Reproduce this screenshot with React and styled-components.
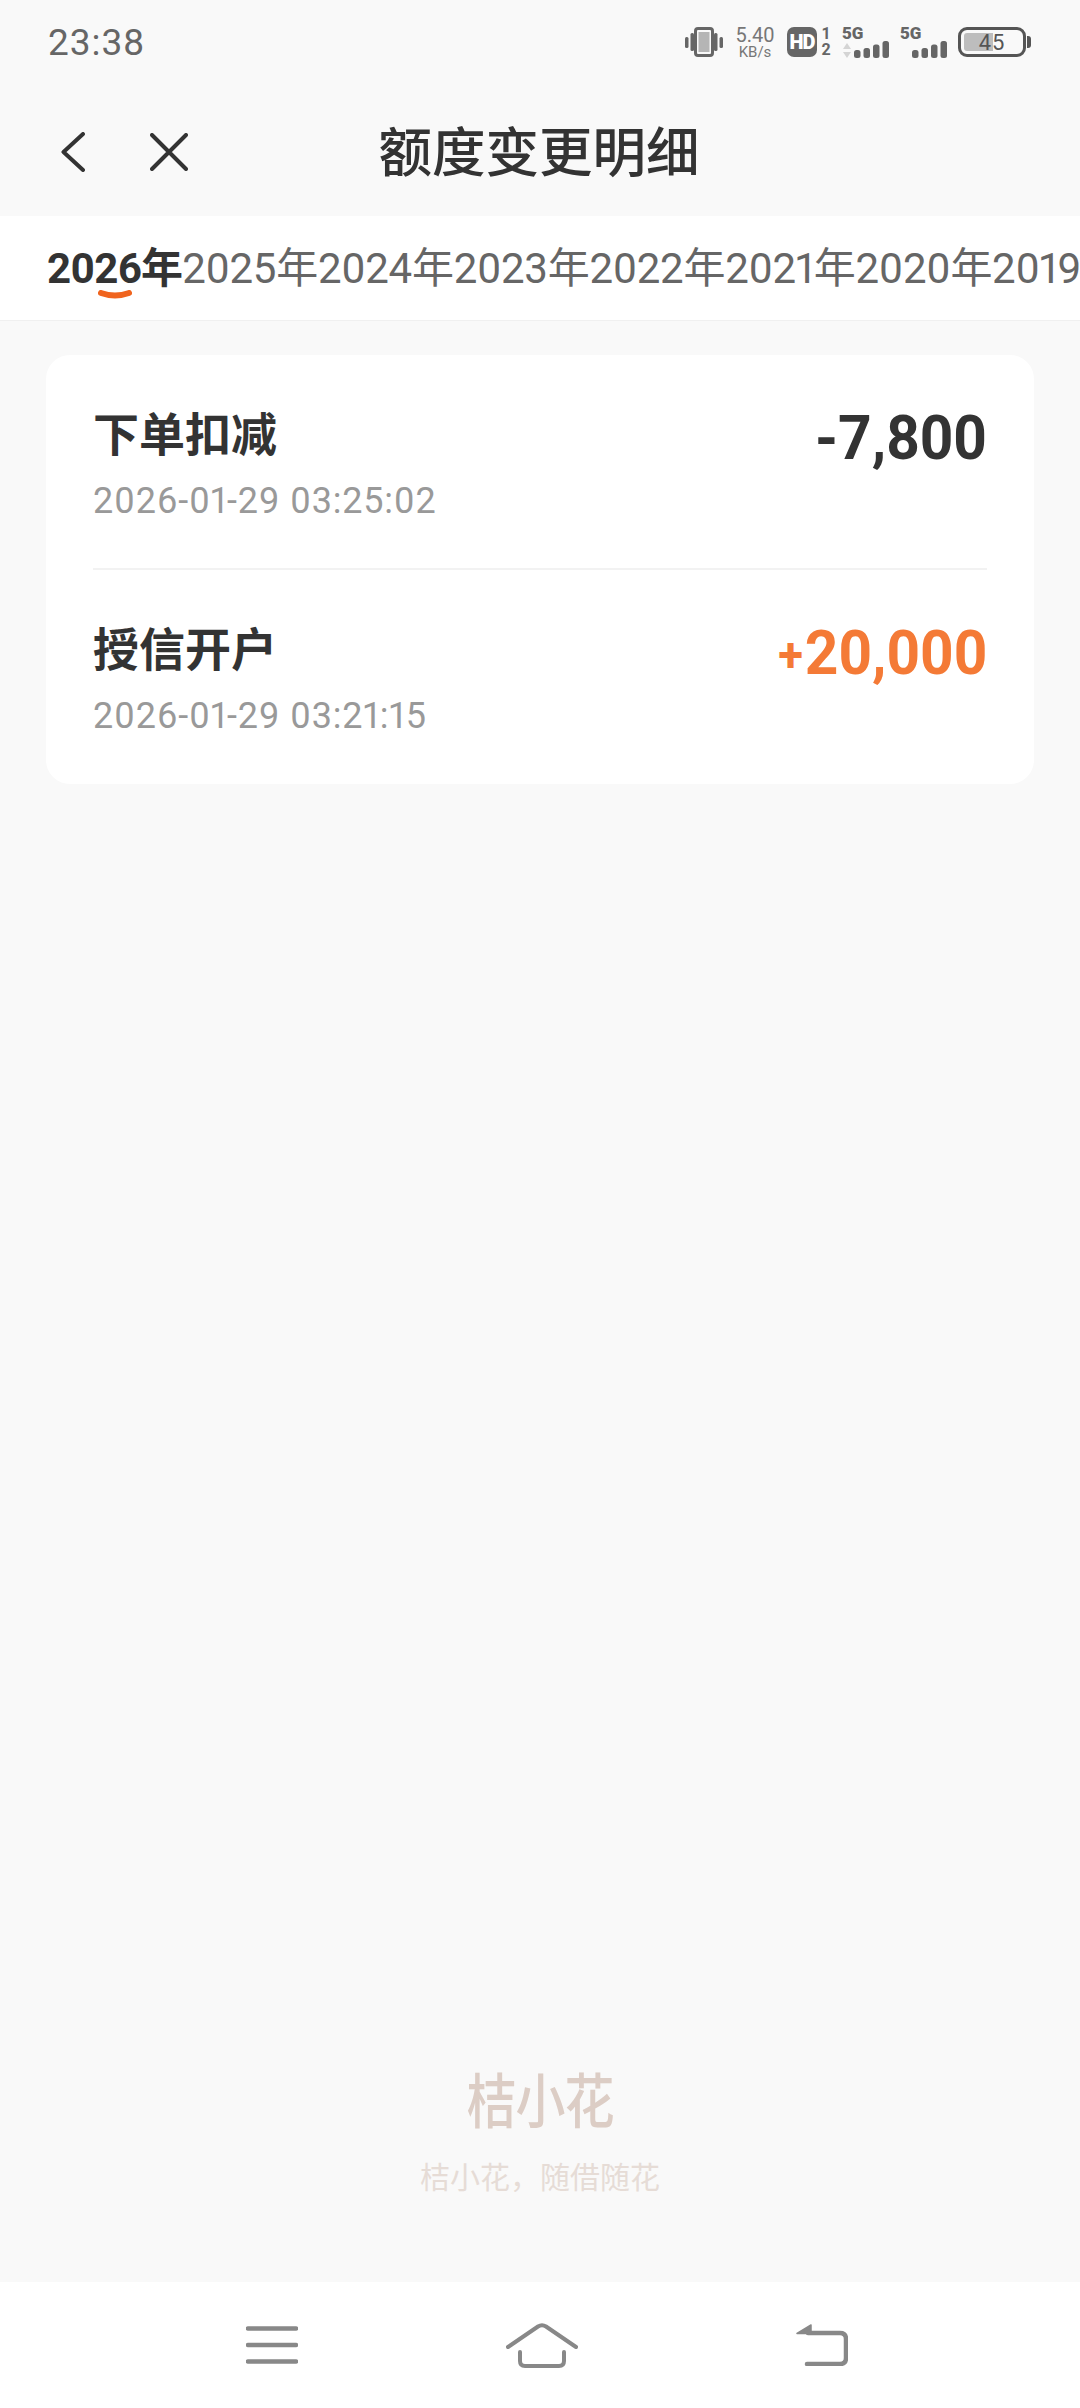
import styled, { createGlobalStyle } from 'styled-components';

const GlobalStyle = createGlobalStyle`
  html, body {
    margin: 0;
    padding: 0;
    background: #f9f9f9;
  }
  * {
    box-sizing: border-box;
  }
`;

const FONT = `Roboto, "Noto Sans CJK SC", sans-serif`;

const years = ['2026', '2025', '2024', '2023', '2022', '2021', '2020', '2019'];

const records = [
  { title: '下单扣减', time: '2026-01-29 03:25:02', sign: '-', amount: '7,800' },
  { title: '授信开户', time: '2026-01-29 03:21:15', sign: '+', amount: '20,000', positive: true },
];

const Signal = () => (
  <svg width="35" height="17" viewBox="0 0 35 17" fill="#666">
    <rect x="0" y="9" width="6.5" height="8" rx="2.5" />
    <rect x="9.5" y="7" width="6.5" height="10" rx="2.5" />
    <rect x="19" y="3.5" width="6.5" height="13.5" rx="2.5" />
    <rect x="28.5" y="0" width="6.5" height="17" rx="2.5" />
  </svg>
);

const App = () => {
  return (
    <Page>
      <GlobalStyle />
      <StatusBar>
        <Clock>23:38</Clock>
        <StatusIcons>
          <svg width="38" height="30" viewBox="0 0 38 30" fill="none">
            <rect x="0" y="10" width="3.5" height="11" rx="1.5" fill="#666" />
            <rect x="5.5" y="6" width="3.5" height="18" rx="1.5" fill="#666" />
            <rect x="10.5" y="1.5" width="17" height="27" rx="2.5" stroke="#666" strokeWidth="3" />
            <rect x="13.5" y="5" width="11" height="20" fill="#b5b5b5" />
            <rect x="29" y="6" width="3.5" height="18" rx="1.5" fill="#666" />
            <rect x="34.5" y="10" width="3.5" height="11" rx="1.5" fill="#666" />
          </svg>
          <Speed>
            <SpeedValue>5.40</SpeedValue>
            <SpeedUnit>KB/s</SpeedUnit>
          </Speed>
          <SimGroup>
            <HdBadge>HD</HdBadge>
            <SimNumbers>
              <span>1</span>
              <span>2</span>
            </SimNumbers>
          </SimGroup>
          <Network>
            <NetworkLabel>5G</NetworkLabel>
            <NetworkBars>
              <svg width="8" height="15" viewBox="0 0 8 15" fill="#d4d4d4">
                <path d="M4 0 8 6H0zM0 9h8l-4 6z" />
              </svg>
              <Signal />
            </NetworkBars>
          </Network>
          <Network>
            <NetworkLabel>5G</NetworkLabel>
            <NetworkBars>
              <Signal />
            </NetworkBars>
          </Network>
          <Battery>
            <BatteryFill />
            <BatteryText>45</BatteryText>
          </Battery>
        </StatusIcons>
      </StatusBar>

      <Header>
        <HeaderIcons>
          <svg width="24" height="40" viewBox="0 0 24 40" fill="none" stroke="#333" strokeWidth="4" strokeLinecap="round" strokeLinejoin="round">
            <path d="M22 2 2.5 20 22 38" />
          </svg>
          <svg width="38" height="38" viewBox="0 0 38 38" fill="none" stroke="#333" strokeWidth="4" strokeLinecap="round">
            <path d="M2 2 36 36M36 2 2 36" />
          </svg>
        </HeaderIcons>
        <Title>额度变更明细</Title>
      </Header>

      <Tabs>
        {years.map((year, i) => (
          <Tab key={year} $active={i === 0}>
            {year}年
            {i === 0 && (
              <TabSmile width="34" height="10" viewBox="0 0 34 10" fill="none">
                <path d="M3 3Q17 8 31 3" stroke="#f0641e" strokeWidth="6" strokeLinecap="round" />
              </TabSmile>
            )}
          </Tab>
        ))}
      </Tabs>

      <Main>
        <Card>
          {records.map((item) => (
            <Row key={item.title}>
              <div>
                <RowTitle>{item.title}</RowTitle>
                <RowTime>{item.time}</RowTime>
              </div>
              <Amount $positive={item.positive}>
                <Sign $plus={item.positive}>{item.sign}</Sign>
                {item.amount}
              </Amount>
            </Row>
          ))}
        </Card>

        <Brand>
          <BrandLogo>桔小花</BrandLogo>
          <BrandSlogan>桔小花，随借随花</BrandSlogan>
        </Brand>
      </Main>

      <BottomNav>
        <svg width="52" height="38" viewBox="0 0 52 38" fill="none" stroke="#888" strokeWidth="4.5" strokeLinecap="round">
          <path d="M2 2.5H50M2 19H50M2 35.5H50" />
        </svg>
        <HomeIcon width="72" height="45" viewBox="0 0 72 45" fill="none" stroke="#888" strokeWidth="4" strokeLinecap="round" strokeLinejoin="round">
          <path d="M2 24 32 3.5Q36 1 40 3.5L70 24" />
          <path d="M14 29V38Q14 43 19 43H53Q58 43 58 38V29" />
        </HomeIcon>
        <svg width="52" height="42" viewBox="0 0 52 42" fill="none">
          <path d="M1 9.5 15 1V9.5Z" fill="#888" stroke="#888" strokeWidth="1.5" strokeLinejoin="round" />
          <path d="M12 9H44Q50 9 50 15V34Q50 40 44 40H11" stroke="#888" strokeWidth="4.5" strokeLinecap="round" />
        </svg>
      </BottomNav>
    </Page>
  );
};

const Page = styled.div`
  width: 1080px;
  height: 2408px;
  overflow: hidden;
  display: flex;
  flex-direction: column;
  background: #f9f9f9;
  font-family: ${FONT};
  color: #333;
`;

const StatusBar = styled.div`
  height: 84px;
  padding: 0 48px;
  display: flex;
  align-items: center;
  justify-content: space-between;
`;

const Clock = styled.div`
  font-size: 37px;
  letter-spacing: 1px;
  color: #666;
`;

const StatusIcons = styled.div`
  display: flex;
  align-items: center;
  gap: 11px;
`;

const Speed = styled.div`
  width: 42px;
  display: flex;
  flex-direction: column;
  align-items: center;
  color: #777;
`;

const SpeedValue = styled.span`
  font-size: 20px;
  line-height: 20px;
`;

const SpeedUnit = styled.span`
  font-size: 15px;
  line-height: 15px;
`;

const SimGroup = styled.div`
  display: flex;
  align-items: center;
  gap: 4px;
`;

const HdBadge = styled.div`
  width: 30px;
  height: 30px;
  border-radius: 7px;
  background: #666;
  color: #fff;
  font-size: 20px;
  font-weight: 900;
  letter-spacing: -1px;
  display: flex;
  align-items: center;
  justify-content: center;
`;

const SimNumbers = styled.div`
  width: 10px;
  display: flex;
  flex-direction: column;
  align-items: center;
  font-size: 16px;
  line-height: 16px;
  font-weight: 700;
  color: #666;
`;

const Network = styled.div`
  width: 47px;
  height: 30px;
  display: flex;
  flex-direction: column;
  color: #666;
`;

const NetworkLabel = styled.span`
  font-size: 17px;
  line-height: 13px;
  font-weight: 900;
`;

const NetworkBars = styled.div`
  display: flex;
  align-items: flex-end;
  justify-content: flex-end;
  gap: 3px;
  margin-top: 1px;
`;

const Battery = styled.div`
  position: relative;
  width: 68px;
  height: 30px;
  margin-right: 6px;
  border: 3px solid #555;
  border-radius: 9px;
  padding: 3px;
  &::after {
    content: '';
    position: absolute;
    right: -8px;
    top: 6px;
    width: 4px;
    height: 12px;
    border-radius: 0 3px 3px 0;
    background: #555;
  }
`;

const BatteryFill = styled.div`
  width: 29px;
  height: 100%;
  border-radius: 3px 0 0 3px;
  background: #bdbdbd;
`;

const BatteryText = styled.span`
  position: absolute;
  inset: 0;
  display: flex;
  align-items: center;
  justify-content: center;
  font-size: 22px;
  letter-spacing: 1px;
  color: #555;
`;

const Header = styled.div`
  position: relative;
  height: 132px;
  padding: 3px 0 0 61px;
  display: flex;
  align-items: center;
`;

const HeaderIcons = styled.div`
  display: flex;
  align-items: center;
  gap: 65px;
`;

const Title = styled.div`
  position: absolute;
  left: 0;
  right: 2px;
  top: 4px;
  line-height: 132px;
  text-align: center;
  font-size: 53.5px;
  font-weight: 500;
  color: #333;
`;

const Tabs = styled.div`
  height: 105px;
  padding: 2px 0 0 47px;
  display: flex;
  align-items: center;
  background: #fff;
  border-bottom: 1px solid #f0f0f0;
  overflow: hidden;
  font-variant-numeric: proportional-nums;
`;

const Tab = styled.div`
  position: relative;
  flex: none;
  font-size: 42px;
  line-height: 50px;
  letter-spacing: ${(p) => (p.$active ? '-0.9px' : '-0.3px')};
  font-weight: ${(p) => (p.$active ? 700 : 400)};
  color: ${(p) => (p.$active ? '#333' : '#666')};
`;

const TabSmile = styled.svg`
  position: absolute;
  left: 51px;
  bottom: -6px;
`;

const Main = styled.div`
  flex: 1;
  padding: 34px 46px 0;
  display: flex;
  flex-direction: column;
`;

const Card = styled.div`
  padding: 0 47px;
  background: #fff;
  border-radius: 24px;
`;

const Row = styled.div`
  height: 214.5px;
  padding-top: 50px;
  display: flex;
  justify-content: space-between;
  align-items: flex-start;
  &:not(:last-child) {
    border-bottom: 2px solid #f2f2f2;
  }
`;

const RowTitle = styled.div`
  font-size: 46px;
  line-height: 60px;
  font-weight: 700;
  color: #333;
`;

const RowTime = styled.div`
  margin-top: 15px;
  font-size: 36px;
  line-height: 42px;
  letter-spacing: 0.8px;
  color: #999;
  font-variant-numeric: proportional-nums;
`;

const Amount = styled.div`
  margin-top: -3px;
  font-size: 62px;
  line-height: 72px;
  font-weight: 700;
  transform: scaleX(0.945);
  transform-origin: right center;
  color: ${(p) => (p.$positive ? '#f47a36' : '#333')};
`;

const Sign = styled.span`
  font-size: ${(p) => (p.$plus ? '48px' : '62px')};
  margin-right: ${(p) => (p.$plus ? '2px' : '0')};
  vertical-align: ${(p) => (p.$plus ? '3px' : 'baseline')};
`;

const Brand = styled.div`
  margin-top: auto;
  padding-bottom: 84px;
  display: flex;
  flex-direction: column;
  align-items: center;
`;

const BrandLogo = styled.div`
  font-size: 50px;
  line-height: 72px;
  font-weight: 500;
  letter-spacing: -1px;
  transform: translateY(3px) scaleY(1.18);
  color: #dccdc5;
`;

const BrandSlogan = styled.div`
  margin-top: 22px;
  font-size: 30px;
  line-height: 40px;
  color: #e6dcd6;
`;

const BottomNav = styled.div`
  height: 126px;
  padding: 0 232px 0 246px;
  display: flex;
  align-items: center;
  justify-content: space-between;
  background: #fff;
`;

const HomeIcon = styled.svg`
  margin-right: 10px;
`;

export default App;
